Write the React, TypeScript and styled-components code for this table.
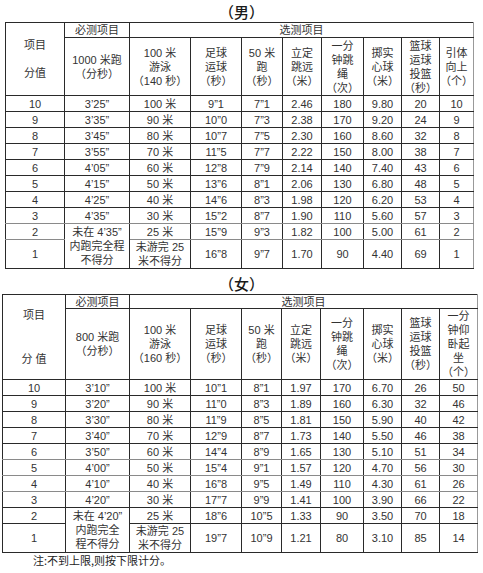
import styled, { createGlobalStyle } from "styled-components";

const GlobalStyle = createGlobalStyle`
  html, body {
    margin: 0;
    padding: 0;
    background: #fff;
  }
  body {
    font-family: "Liberation Sans", "Noto Sans CJK SC", sans-serif;
    color: #333;
  }
`;

type Sheet = {
  title: string;
  left: number;
  top: number;
  cols: number[];
  scoreGap: number;
  scoreLabel: string[];
  runHead: string[];
  heads: string[][];
  headTop: number;
  headBottom: number;
  rows: string[][];
  failRun: string[];
  failSwim: string[];
  lastRow: string[];
  greyRows: number[];
};

const boys: Sheet = {
  title: "（男）",
  left: 5,
  top: 22,
  cols: [59, 65, 61, 51, 41, 39, 42, 38, 38, 34],
  scoreGap: 14,
  scoreLabel: ["项目", "分值"],
  runHead: ["1000 米跑", "（分秒）"],
  heads: [
    ["100 米", "游泳", "（140 秒）"],
    ["足球", "运球", "（秒）"],
    ["50 米", "跑", "（秒）"],
    ["立定", "跳远", "（米）"],
    ["一分", "钟跳", "绳", "（次）"],
    ["掷实", "心球", "（米）"],
    ["篮球", "运球", "投篮", "（秒）"],
    ["引体", "向上", "（个）"],
  ],
  headTop: 14,
  headBottom: 57,
  rows: [
    ["10", "3’25”", "100 米", "9”1", "7”1", "2.46", "180", "9.80", "20", "10"],
    ["9", "3’35”", "90 米", "10”0", "7”3", "2.38", "170", "9.20", "24", "9"],
    ["8", "3’45”", "80 米", "10”7", "7”5", "2.30", "160", "8.60", "32", "8"],
    ["7", "3’55”", "70 米", "11”5", "7”7", "2.22", "150", "8.00", "38", "7"],
    ["6", "4’05”", "60 米", "12”8", "7”9", "2.14", "140", "7.40", "43", "6"],
    ["5", "4’15”", "50 米", "13”6", "8”1", "2.06", "130", "6.80", "48", "5"],
    ["4", "4’25”", "40 米", "14”6", "8”3", "1.98", "120", "6.20", "53", "4"],
    ["3", "4’35”", "30 米", "15”2", "8”7", "1.90", "110", "5.60", "57", "3"],
    ["2", "", "25 米", "15”9", "9”3", "1.82", "100", "5.00", "61", "2"],
  ],
  failRun: ["未在 4’35”", "内跑完全程", "不得分"],
  failSwim: ["未游完 25", "米不得分"],
  lastRow: ["1", "16”8", "9”7", "1.70", "90", "4.40", "69", "1"],
  greyRows: [7, 8],
};

const girls: Sheet = {
  title: "（女）",
  left: 2,
  top: 25,
  cols: [63, 64, 61, 51, 40, 39, 43, 38, 38, 38],
  scoreGap: 30,
  scoreLabel: ["项目", "分 值"],
  runHead: ["800 米跑", "（分秒）"],
  heads: [
    ["100 米", "游泳", "（160 秒）"],
    ["足球", "运球", "（秒）"],
    ["50 米", "跑", "（秒）"],
    ["立定", "跳远", "（米）"],
    ["一分", "钟跳", "绳", "（次）"],
    ["掷实", "心球", "（米）"],
    ["篮球", "运球", "投篮", "（秒）"],
    ["一分", "钟仰", "卧起", "坐", "（个）"],
  ],
  headTop: 13,
  headBottom: 70,
  rows: [
    ["10", "3’10”", "100 米", "10”1", "8”1", "1.97", "170", "6.70", "26", "50"],
    ["9", "3’20”", "90 米", "11”0", "8”3", "1.89", "160", "6.30", "32", "46"],
    ["8", "3’30”", "80 米", "11”9", "8”5", "1.81", "150", "5.90", "40", "42"],
    ["7", "3’40”", "70 米", "12”9", "8”7", "1.73", "140", "5.50", "46", "38"],
    ["6", "3’50”", "60 米", "14”4", "8”9", "1.65", "130", "5.10", "51", "34"],
    ["5", "4’00”", "50 米", "15”4", "9”1", "1.57", "120", "4.70", "56", "30"],
    ["4", "4’10”", "40 米", "16”8", "9”5", "1.49", "110", "4.30", "61", "26"],
    ["3", "4’20”", "30 米", "17”7", "9”9", "1.41", "100", "3.90", "66", "22"],
    ["2", "", "25 米", "18”6", "10”5", "1.33", "90", "3.50", "70", "18"],
  ],
  failRun: ["未在 4’20”", "内跑完全", "程不得分"],
  failSwim: ["未游完 25", "米不得分"],
  lastRow: ["1", "19”7", "10”9", "1.21", "80", "3.10", "85", "14"],
  greyRows: [4, 5, 6],
};

const Page = styled.div`
  width: 483px;
  height: 573px;
  display: flex;
  flex-direction: column;
  overflow: hidden;
`;

const Section = styled.section<{ $left: number }>`
  display: flex;
  flex-direction: column;
  padding-left: ${(p) => p.$left}px;
`;

const Title = styled.h2<{ $height: number; $left: number }>`
  margin: 0 0 0 ${(p) => -p.$left}px;
  height: ${(p) => p.$height}px;
  width: 483px;
  box-sizing: border-box;
  padding-bottom: 2px;
  display: flex;
  align-items: flex-end;
  justify-content: center;
  font-family: "Noto Sans CJK SC", sans-serif;
  font-size: 15px;
  line-height: 16px;
  font-weight: 500;
  color: #1a1a1a;
`;

const Grid = styled.table<{ $width: number }>`
  width: ${(p) => p.$width}px;
  table-layout: fixed;
  border-collapse: collapse;
  border-right: 1px solid #999;
  font-size: 11px;
  color: #333;
`;

const Cell = styled.td<{ $h?: number; $line?: string }>`
  border: 1px solid #2a2a2a;
  border-bottom-color: ${(p) => p.$line ?? "#2a2a2a"};
  padding: 0;
  text-align: center;
  vertical-align: middle;
  height: ${(p) => (p.$h ? `${p.$h}px` : "auto")};
  line-height: 12px;
  white-space: nowrap;
  overflow: hidden;
  &:last-child {
    border-right-color: #999;
  }
`;

const HeadCell = styled(Cell).attrs({ as: "th" })`
  font-weight: normal;
  font-size: 11px;
`;

const Stack = styled.div<{ $gap?: number }>`
  display: flex;
  flex-direction: column;
  align-items: center;
  gap: ${(p) => p.$gap ?? 0}px;
  line-height: 14px;
`;

const Note = styled.p`
  margin: 0;
  padding: 1px 0 0 33px;
  font-family: "Noto Sans CJK SC", sans-serif;
  font-size: 11px;
  line-height: 13px;
  color: #222;
`;

const Lines = ({ lines, gap }: { lines: string[]; gap?: number }) => (
  <Stack $gap={gap}>
    {lines.map((l, i) => (
      <span key={i}>{l}</span>
    ))}
  </Stack>
);

const ScoreTable = ({ s }: { s: Sheet }) => {
  const width = s.cols.reduce((a, b) => a + b, 0);
  const line = (i: number) => (s.greyRows.includes(i) ? "#8a8a8a" : "#2a2a2a");
  return (
    <Section $left={s.left}>
      <Title $height={s.top} $left={s.left}>
        {s.title}
      </Title>
      <Grid $width={width}>
        <colgroup>
          {s.cols.map((w, i) => (
            <col key={i} style={{ width: w }} />
          ))}
        </colgroup>
        <thead>
          <tr>
            <HeadCell rowSpan={2}>
              <Lines lines={s.scoreLabel} gap={s.scoreGap} />
            </HeadCell>
            <HeadCell $h={s.headTop}>必测项目</HeadCell>
            <HeadCell colSpan={8}>选测项目</HeadCell>
          </tr>
          <tr>
            <HeadCell $h={s.headBottom}>
              <Lines lines={s.runHead} />
            </HeadCell>
            {s.heads.map((h, i) => (
              <HeadCell key={i}>
                <Lines lines={h} />
              </HeadCell>
            ))}
          </tr>
        </thead>
        <tbody>
          {s.rows.map((r, i) => (
            <tr key={r[0]}>
              {r.map((c, j) =>
                j === 1 && i === s.rows.length - 1 ? (
                  <Cell key={j} rowSpan={2}>
                    <Lines lines={s.failRun} />
                  </Cell>
                ) : (
                  <Cell key={j} $h={j === 0 ? 15 : undefined} $line={line(i)}>
                    {c}
                  </Cell>
                )
              )}
            </tr>
          ))}
          <tr>
            <Cell $h={28}>{s.lastRow[0]}</Cell>
            <Cell>
              <Lines lines={s.failSwim} />
            </Cell>
            {s.lastRow.slice(1).map((c, j) => (
              <Cell key={j}>{c}</Cell>
            ))}
          </tr>
        </tbody>
      </Grid>
    </Section>
  );
};

export default function App() {
  return (
    <Page>
      <GlobalStyle />
      <ScoreTable s={boys} />
      <ScoreTable s={girls} />
      <Note>注:不到上限,则按下限计分。</Note>
    </Page>
  );
}
